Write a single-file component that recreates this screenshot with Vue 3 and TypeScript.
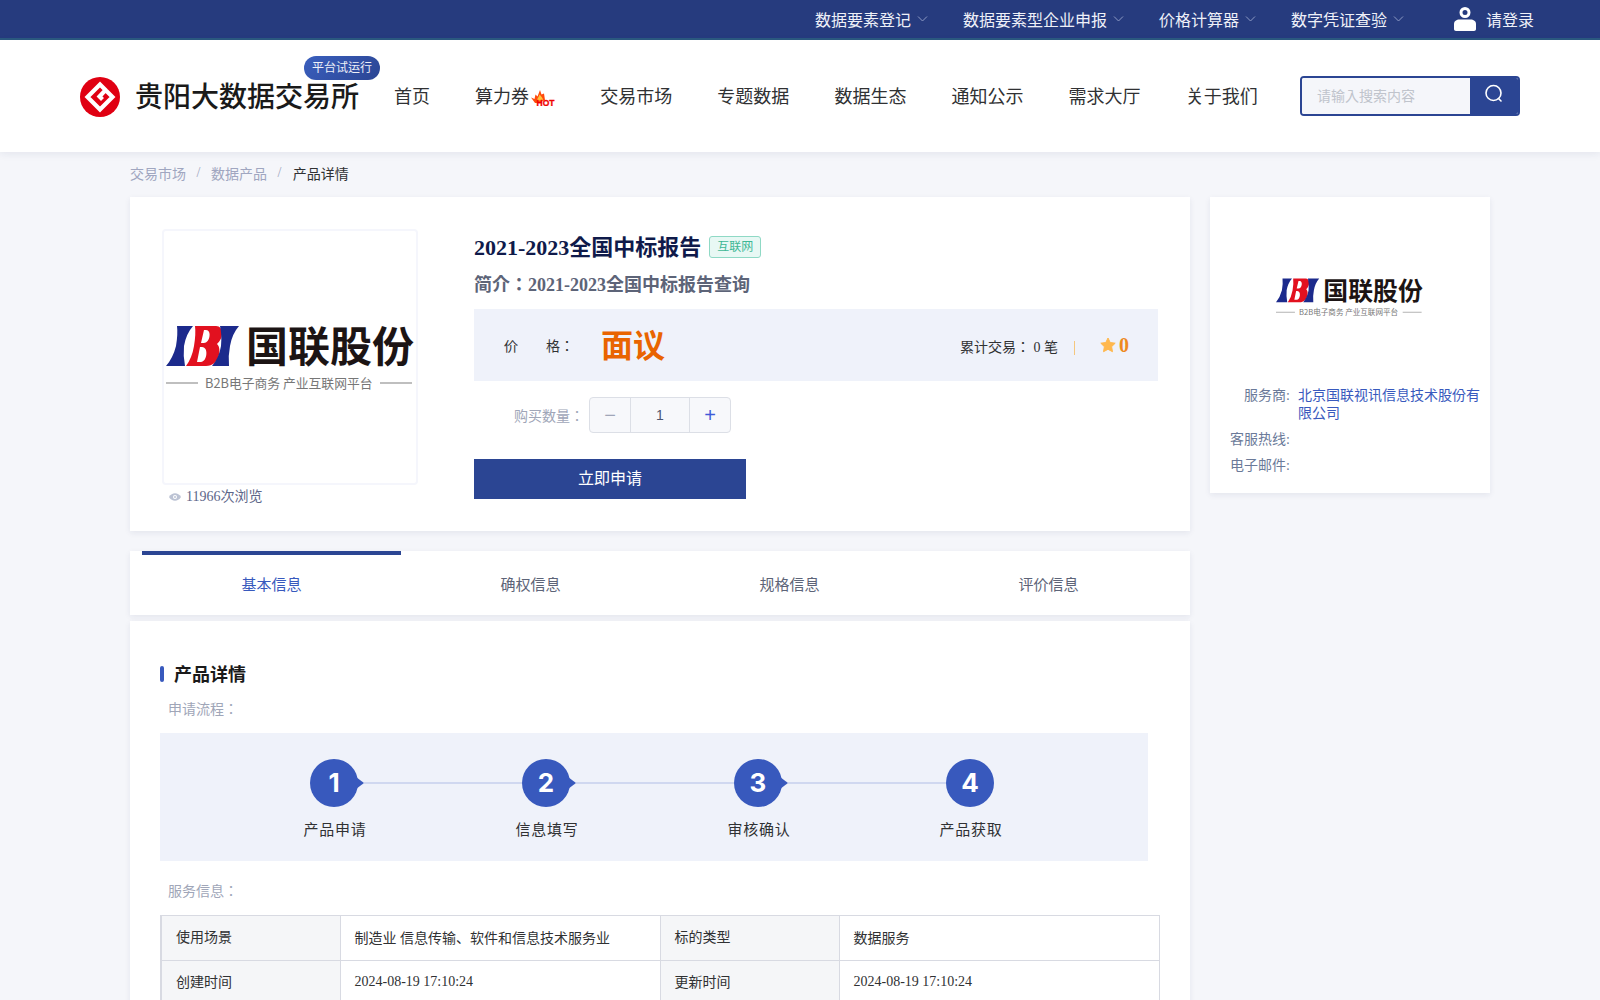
<template>
  <div class="page">
    <div class="topbar">
      <a v-for="item in topLinks" :key="item" class="top-link">
        <span>{{ item }}</span>
        <svg class="chevron" viewBox="0 0 11 11" width="11" height="11">
          <polyline points="1,3.5 5.5,8 10,3.5" fill="none" stroke="#8d9ac4" stroke-width="1" />
        </svg>
      </a>
      <a class="login">
        <svg viewBox="0 0 22 24" width="22" height="24">
          <circle cx="11" cy="5.5" r="4" fill="none" stroke="#fff" stroke-width="3" />
          <path d="M0 17c0-3 2.500-4.500 5.500-4.500h11c3 0 5.500 1.500 5.500 4.500v5c0 1.200-.8 2-2 2H2c-1.200 0-2-.8-2-2z" fill="#fff" />
        </svg>
        <span>请登录</span>
      </a>
    </div>

    <header class="header">
      <div class="brand">
        <svg class="brand-mark" viewBox="0 0 40 40" width="40" height="40">
          <circle cx="20" cy="20" r="20" fill="#e00012" />
          <path d="M26 13.500 20 7.500 7.500 20 20 32.500 32.500 20 25.500 13 19.500 19.500 22.500 22.500" fill="none" stroke="#fff" stroke-width="4.200" />
        </svg>
        <span class="brand-name">贵阳大数据交易所</span>
        <span class="brand-badge">平台试运行</span>
      </div>
      <nav class="nav">
        <a v-for="item in navLinks" :key="item" class="nav-link">
          {{ item }}
          <svg v-if="item === '算力券'" class="hot" viewBox="0 0 24 16" width="24" height="16">
            <path d="M0 7.500 3.500 9 4.500 4.500 6.500 6.500 9 0 10.500 4.500 13 3.500 14 10 8 13 4 13z" fill="#ff4a0c" />
            <path d="M6 10.500C6 8 8 7.500 8.500 4.500 10 6.500 12 7.500 12 10.500z" fill="#ffc23c" />
            <text x="5.500" y="15.500" class="hot-text">HOT</text>
          </svg>
        </a>
      </nav>
      <div class="search">
        <span class="search-input">请输入搜索内容</span>
        <span class="search-btn">
          <svg viewBox="0 0 20 20" width="20" height="20">
            <circle cx="9.500" cy="9" r="7.500" fill="none" stroke="#fff" stroke-width="1.600" />
            <path d="M14.500 14.500 17 17" stroke="#fff" stroke-width="1.600" stroke-linecap="round" />
          </svg>
        </span>
      </div>
    </header>

    <div class="crumbs">
      <span>交易市场</span><i>/</i><span>数据产品</span><i>/</i><span class="crumb-now">产品详情</span>
    </div>

    <main class="main">
      <div class="left">
        <section class="card product">
          <div class="cover-col">
            <div class="cover">
              <svg class="company-logo" viewBox="0 -14 250 82" width="250" height="82">
                <g id="ibi-logo">
                  <path d="M11 0H27Q20 8 18 20 17 30 19 40H0Q7 32 10 20 12 8 11 0z" fill="#1c2a8c" />
                  <path fill-rule="evenodd" d="M29 0H50C58 0 58 12 51 18 56 22 54 40 40 40H20Q26 32 28 20 30 8 29 0zM38 4 35 17H38C44 17 46 4 40 4zM34 21 31 36H35C41 36 43 21 36 21z" fill="#e2111f" />
                  <path d="M54 0H73Q66 8 64 20 62 30 63 40H46Q53 32 55 20 56 8 54 0z" fill="#1c2a8c" />
                  <text x="80" y="36" class="logo-name">国联股份</text>
                  <path d="M0 57h32M214 57h32" stroke="#aaa" stroke-width="1.500" />
                  <text x="39" y="62" class="logo-sub">B2B电子商务 产业互联网平台</text>
                </g>
              </svg>
            </div>
            <div class="views">
              <svg viewBox="0 0 12 10" width="12" height="10">
                <path d="M0 5c3-5 9-5 12 0-3 5-9 5-12 0z" fill="#bcc3d4" />
                <circle cx="6" cy="5" r="2" fill="#fff" />
                <circle cx="6" cy="5" r="1" fill="#bcc3d4" />
              </svg>
              <span>11966次浏览</span>
            </div>
          </div>

          <div class="info">
            <div class="title-row">
              <h1>2021-2023全国中标报告</h1>
              <span class="tag">互联网</span>
            </div>
            <p class="intro">简介：2021-2023全国中标报告查询</p>
            <div class="price-box">
              <span class="price-label">价&emsp;&emsp;格：</span>
              <span class="price">面议</span>
              <span class="deals">累计交易： 0 笔</span>
              <i class="deal-sep"></i>
              <svg class="star" viewBox="0 0 16 16" width="16" height="16">
                <path d="M8 1l2.200 4.500 5 .7-3.600 3.500.9 5L8 12.300 3.500 14.700l.9-5L.8 6.200l5-.7z" fill="#ffb84d" stroke="#ffb84d" stroke-linejoin="round" />
              </svg>
              <span class="score">0</span>
            </div>
            <div class="qty-row">
              <span class="qty-label">购买数量：</span>
              <div class="stepper">
                <span class="step-btn minus">−</span>
                <span class="step-value">{{ quantity }}</span>
                <span class="step-btn plus">+</span>
              </div>
            </div>
            <button class="apply">立即申请</button>
          </div>
        </section>

        <section class="card tabs">
          <a v-for="(tab, i) in tabs" :key="tab" class="tab" :class="{ active: i === 0 }">{{ tab }}</a>
        </section>

        <section class="card detail">
          <h2>产品详情</h2>
          <p class="sub-label">申请流程：</p>
          <div class="flow">
            <div v-for="(step, i) in steps" :key="step" class="step">
              <span class="step-num" :class="{ linked: i < steps.length - 1 }">{{ i + 1 }}</span>
              <span class="step-name">{{ step }}</span>
            </div>
          </div>
          <p class="sub-label service">服务信息：</p>
          <table class="spec">
            <colgroup>
              <col class="col-first" />
              <col class="col-val" />
              <col class="col-key" />
              <col class="col-val" />
            </colgroup>
            <tbody>
              <tr v-for="row in specRows" :key="row[0]">
                <th>{{ row[0] }}</th>
                <td>{{ row[1] }}</td>
                <th>{{ row[2] }}</th>
                <td>{{ row[3] }}</td>
              </tr>
            </tbody>
          </table>
        </section>
      </div>

      <aside class="card vendor">
        <svg class="vendor-logo" viewBox="0 -14 250 82" width="148" height="49">
          <use href="#ibi-logo" />
        </svg>
        <div class="vendor-row">
          <span class="vendor-key">服务商:</span>
          <span class="vendor-val">北京国联视讯信息技术股份有限公司</span>
        </div>
        <div class="vendor-row">
          <span class="vendor-key">客服热线:</span>
        </div>
        <div class="vendor-row">
          <span class="vendor-key">电子邮件:</span>
        </div>
      </aside>
    </main>
  </div>
</template>

<script setup lang="ts">
import { ref } from 'vue'

const topLinks = ['数据要素登记', '数据要素型企业申报', '价格计算器', '数字凭证查验']
const navLinks = ['首页', '算力券', '交易市场', '专题数据', '数据生态', '通知公示', '需求大厅', '关于我们']
const tabs = ['基本信息', '确权信息', '规格信息', '评价信息']
const steps = ['产品申请', '信息填写', '审核确认', '产品获取']

const specRows = [
  ['使用场景', '制造业 信息传输、软件和信息技术服务业', '标的类型', '数据服务'],
  ['创建时间', '2024-08-19 17:10:24', '更新时间', '2024-08-19 17:10:24']
]

const quantity = ref(1)
</script>

<style>
html,
body {
  margin: 0;
  background: #f5f6fa;
}
</style>

<style scoped>
.page {
  height: 1000px;
  overflow: hidden;
  background: #f5f6fa;
  font-family: "Liberation Serif", "Noto Sans CJK JP", serif;
  font-size: 14px;
  color: #303133;
}

/* top bar */
.topbar {
  display: flex;
  justify-content: flex-end;
  align-items: center;
  box-sizing: border-box;
  height: 40px;
  padding-right: 66px;
  background: #263b7e;
  border-bottom: 2px solid #2b5a80;
  color: #fff;
  font-size: 16px;
}

.top-link {
  display: flex;
  align-items: center;
  gap: 6px;
  margin-right: 35px;
  padding-bottom: 1px;
  color: #eef0f8;
}

.login {
  display: flex;
  align-items: center;
  gap: 10px;
  margin-left: 15px;
  padding-bottom: 1px;
  color: #eef0f8;
}

/* header */
.header {
  position: relative;
  display: flex;
  align-items: center;
  height: 112px;
  padding: 0 80px;
  background: #fff;
  box-shadow: 0 2px 8px rgba(30, 40, 90, 0.08);
}

.brand {
  position: relative;
  display: flex;
  align-items: center;
  gap: 15px;
  margin-top: 2px;
}

.brand-name {
  margin-top: -4px;
  font-size: 28px;
  font-weight: 500;
  color: #1a1a1a;
}

.brand-badge {
  position: absolute;
  left: 224px;
  top: -21px;
  width: 76px;
  height: 24px;
  border-radius: 12px;
  background: linear-gradient(135deg, #3a5fbe, #2b4593);
  color: #eef0f8;
  font-size: 12px;
  line-height: 24px;
  text-align: center;
}

.nav {
  display: flex;
  align-items: center;
  gap: 45.1px;
  margin-left: 35px;
  padding-bottom: 2px;
  font-size: 18px;
  color: #303133;
}

.nav-link {
  position: relative;
  display: flex;
  align-items: center;
}

.hot {
  margin: 6px 0 0 2px;
}

.hot-text {
  font-family: "Liberation Sans", sans-serif;
  font-size: 8.500px;
  font-weight: 700;
  fill: #f00000;
  stroke: #f00000;
  stroke-width: 0.3;
}

.search {
  display: flex;
  box-sizing: border-box;
  width: 220px;
  height: 40px;
  margin-left: auto;
  border: 2px solid #2b4593;
  border-radius: 4px;
  overflow: hidden;
}

.search-input {
  flex: 1;
  padding-left: 15px;
  background: #f5f6fa;
  color: #c0c4cc;
  line-height: 38px;
}

.search-btn {
  display: flex;
  justify-content: center;
  width: 48px;
  padding-top: 6px;
  box-sizing: border-box;
  background: #2b4593;
}

/* breadcrumb */
.crumbs {
  display: flex;
  align-items: center;
  box-sizing: border-box;
  height: 45px;
  padding: 0 0 3px 130px;
  color: #a0a6c0;
}

.crumbs i {
  margin: 0 10.500px;
  font-style: normal;
}

.crumb-now {
  margin-left: 1px;
  color: #303133;
}

/* layout */
.main {
  display: flex;
  align-items: flex-start;
  gap: 20px;
  padding-left: 130px;
}

.left {
  width: 1060px;
}

.card {
  background: #fff;
  box-shadow: 0 2px 6px rgba(30, 40, 90, 0.08);
}

/* product card */
.product {
  display: flex;
  box-sizing: border-box;
  height: 334px;
  padding: 32px;
  gap: 56px;
}

.cover {
  display: flex;
  align-items: center;
  justify-content: flex-start;
  box-sizing: border-box;
  width: 256px;
  height: 256px;
  padding-left: 2px;
  border: 2px solid #f5f6fc;
  border-radius: 4px;
}

.company-logo {
  flex: none;
  margin-top: -9px;
}

.logo-name {
  font-family: "Noto Sans CJK SC", sans-serif;
  font-size: 42px;
  font-weight: 700;
  fill: #1c1414;
}

.logo-sub {
  font-family: "Noto Sans CJK SC", sans-serif;
  font-size: 12.800px;
  fill: #777;
}

.views {
  display: flex;
  align-items: center;
  gap: 5px;
  margin: 2px 0 0 7px;
  line-height: 20px;
  color: #5d6689;
}

.info {
  width: 684px;
}

.title-row {
  display: flex;
  align-items: center;
  gap: 8px;
  height: 30px;
  margin-top: 1px;
}

.title-row h1 {
  margin: 0;
  font-size: 22px;
  font-weight: 700;
  color: #0f1a4a;
}

.tag {
  box-sizing: border-box;
  width: 52px;
  height: 22px;
  margin-top: 4px;
  border: 1px solid #8fd9c5;
  border-radius: 3px;
  background: #e8f8f4;
  color: #3eb795;
  font-size: 12px;
  line-height: 20px;
  text-align: center;
}

.intro {
  margin: 12px 0 0;
  font-size: 18px;
  font-weight: 700;
  line-height: 26px;
  color: #5d6478;
}

.price-box {
  display: flex;
  align-items: center;
  height: 72px;
  margin-top: 11px;
  padding: 0 29px 0 30px;
  background: #eff2fa;
}

.price-label {
  width: 97px;
  margin-top: -1px;
}

.price {
  margin-top: -5px;
  font-size: 32px;
  font-weight: 700;
  color: #e96400;
}

.deals {
  margin-left: auto;
  margin-top: 1px;
}

.deal-sep {
  width: 1px;
  height: 14px;
  margin: 6px 25px 0 16px;
  background: #f5c77e;
}

.star {
  margin-right: 3px;
}

.score {
  font-size: 20px;
  font-weight: 700;
  color: #ee8a1f;
}

.qty-row {
  display: flex;
  align-items: center;
  margin-top: 16px;
  padding-left: 40px;
}

.qty-label {
  width: 75px;
  color: #a0a6b8;
}

.stepper {
  display: flex;
  box-sizing: border-box;
  width: 142px;
  height: 36px;
  border: 1px solid #dcdfe6;
  border-radius: 4px;
  background: #f7f8fb;
  font-family: "Liberation Sans", sans-serif;
  line-height: 34px;
  text-align: center;
}

.step-btn {
  width: 40px;
  font-size: 20px;
}

.minus {
  border-right: 1px solid #dcdfe6;
  color: #a0a6b8;
}

.plus {
  border-left: 1px solid #dcdfe6;
  color: #3f5bd8;
}

.step-value {
  flex: 1;
  color: #4d5570;
}

.apply {
  display: block;
  width: 272px;
  height: 40px;
  margin-top: 26px;
  padding-bottom: 6px;
  border: 0;
  background: #2b4593;
  color: #fff;
  font-family: inherit;
  font-size: 16px;
}

/* tabs */
.tabs {
  display: flex;
  height: 64px;
  margin-top: 20px;
  padding: 0 12px;
}

.tab {
  flex: 1;
  padding-top: 4px;
  border-top: 0 solid transparent;
  font-size: 15px;
  line-height: 60px;
  text-align: center;
  color: #5d6478;
}

.tab.active {
  padding-top: 0;
  border-top-width: 4px;
  border-top-color: #2b4593;
  color: #3859bd;
}

/* detail */
.detail {
  margin-top: 6px;
  padding: 42px 30px 40px;
}

.detail h2 {
  margin: 0;
  padding-left: 14px;
  position: relative;
  font-size: 18px;
  font-weight: 700;
  line-height: 24px;
  color: #1a1a1a;
}

.detail h2::before {
  content: "";
  position: absolute;
  left: 0;
  top: 3px;
  width: 4px;
  height: 16px;
  border-radius: 2px;
  background: #3859bd;
}

.sub-label {
  margin: 13px 0 13px 8px;
  line-height: 20px;
  color: #a0a6b8;
}

.sub-label.service {
  margin: 21px 0 13px 8px;
}

.flow {
  display: flex;
  box-sizing: border-box;
  width: 988px;
  height: 128px;
  padding: 26px 0 0 68px;
  background: #eff2fa;
}

.step {
  display: flex;
  flex-direction: column;
  align-items: center;
  width: 212px;
}

.step-num {
  position: relative;
  width: 48px;
  height: 48px;
  border-radius: 50%;
  background: #3859bd;
  color: #fff;
  font-family: Inter, "Liberation Sans", sans-serif;
  font-size: 26px;
  font-weight: 700;
  line-height: 48px;
  text-align: center;
}

.step-num.linked::before {
  content: "";
  position: absolute;
  left: 46px;
  top: 18px;
  border-left: 8px solid #3859bd;
  border-top: 6px solid transparent;
  border-bottom: 6px solid transparent;
}

.step-num.linked::after {
  content: "";
  position: absolute;
  left: 54px;
  top: 23px;
  width: 158px;
  height: 2px;
  background: #d0d8f0;
}

.step-name {
  margin: 11px 0 0 2px;
  font-family: "Noto Sans CJK SC", sans-serif;
  font-size: 15px;
  letter-spacing: 0.7px;
  line-height: 22px;
  color: #303133;
}

.spec {
  width: 998px;
  border-collapse: collapse;
  table-layout: fixed;
  border-left: 2px solid #d8dae2;
}

.col-first {
  width: 179px;
}

.col-key {
  width: 179px;
}

.col-val {
  width: 320px;
}

.spec th,
.spec td {
  height: 42px;
  padding: 0 0 2px 14px;
  border: 1px solid #d8dae2;
  font-weight: 400;
  text-align: left;
}

.spec th {
  height: 40px;
  padding-bottom: 4px;
  background: #f5f6f8;
}

/* vendor */
.vendor {
  box-sizing: border-box;
  width: 280px;
  height: 296px;
  padding: 73px 10px 0 0;
}

.vendor-logo {
  display: block;
  margin: 0 0 68px 66px;
}

.vendor-row {
  display: flex;
  gap: 8px;
  margin-bottom: 8px;
  line-height: 18px;
}

.vendor-key {
  flex: none;
  width: 80px;
  color: #6b7a99;
  text-align: right;
}

.vendor-val {
  color: #3859bd;
}
</style>
